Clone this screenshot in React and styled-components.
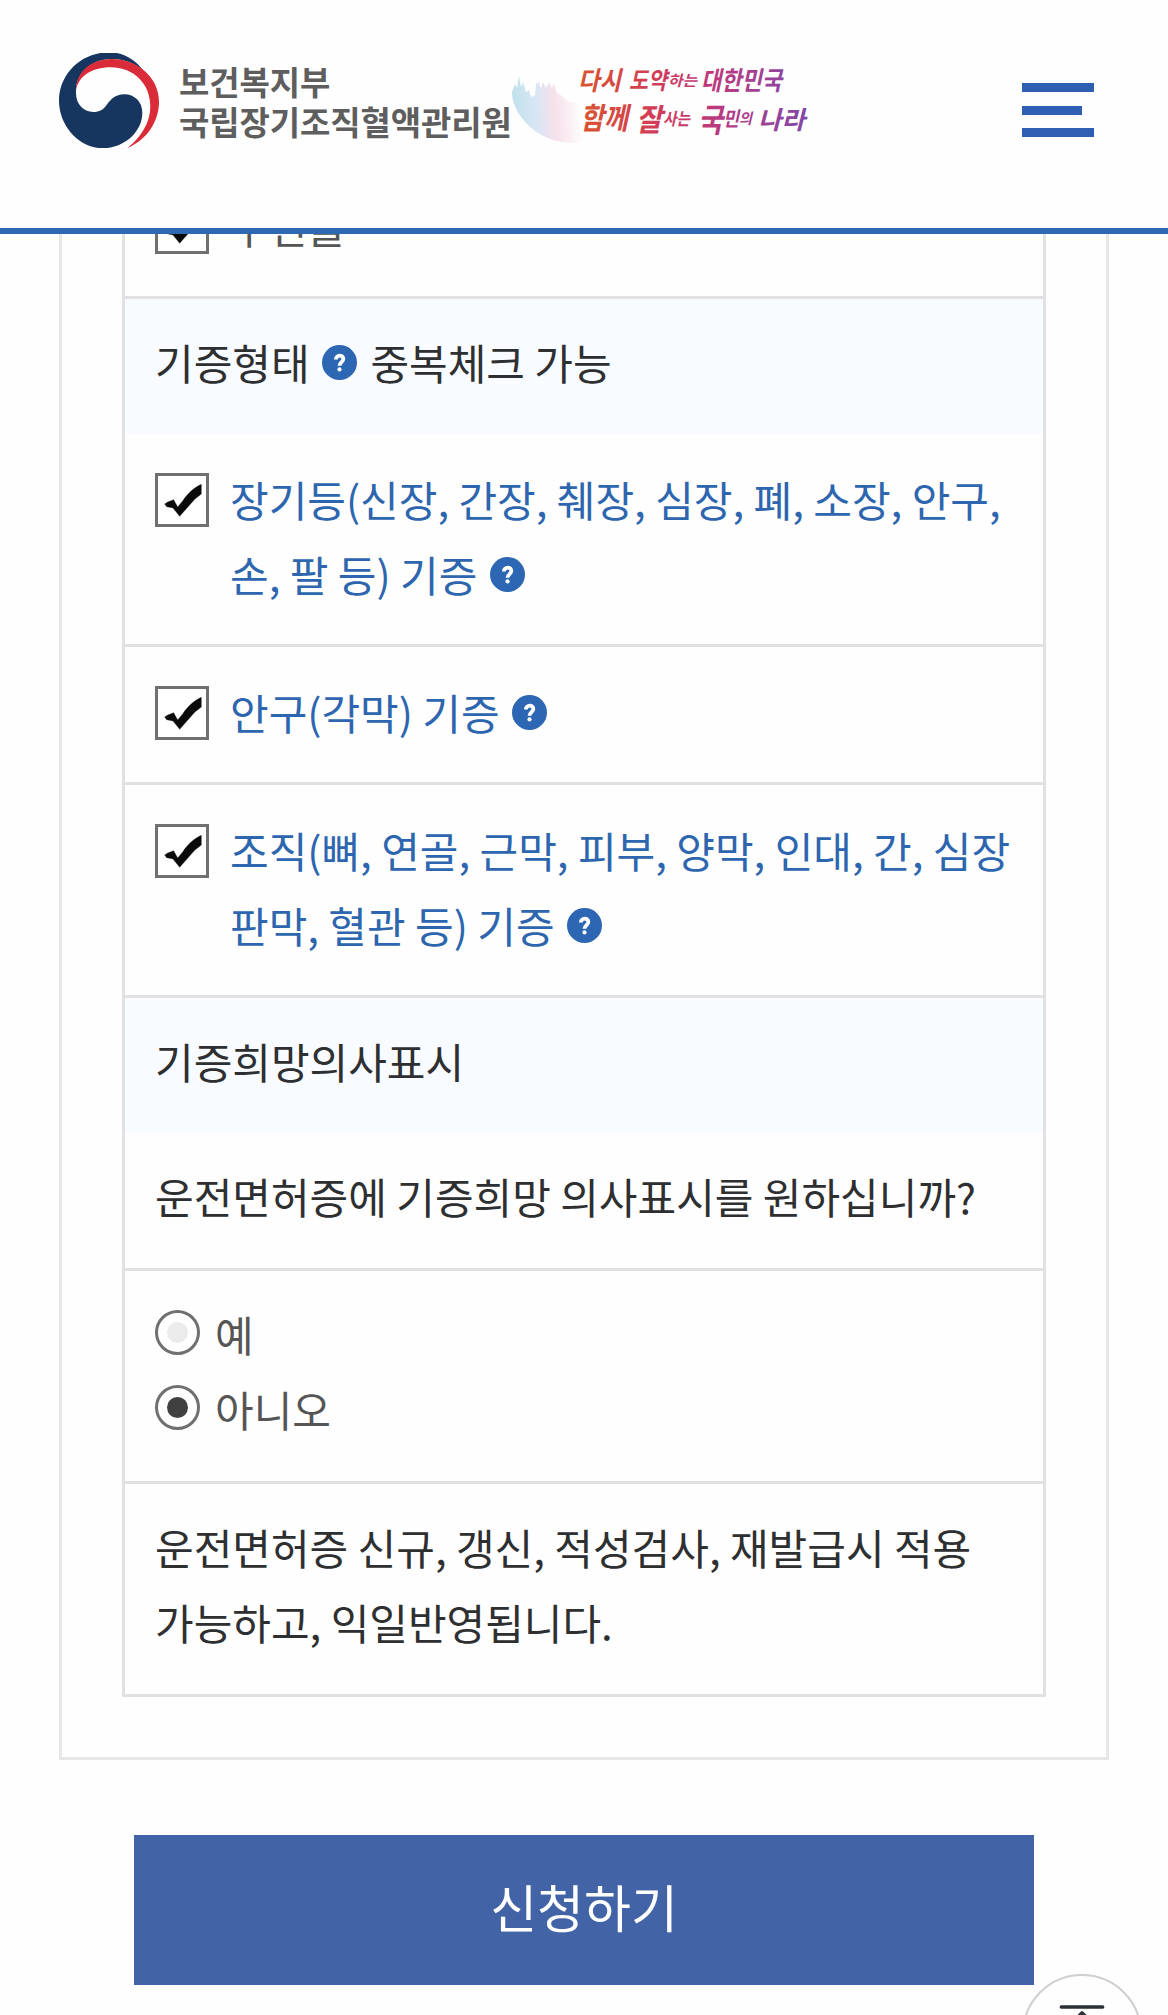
import React from "react";
import styled, { createGlobalStyle, css } from "styled-components";

const GlobalStyle = createGlobalStyle`
  * { box-sizing: border-box; }
  html, body { margin: 0; padding: 0; background: #fefefe; }
  body { font-family: "Noto Sans CJK KR", "Noto Sans", sans-serif; }
`;

const Page = styled.div`
  position: relative;
  width: 1168px;
  height: 2015px;
  overflow: hidden;
  background: #fefefe;
`;

const Header = styled.header`
  position: absolute;
  top: 0;
  left: 0;
  right: 0;
  z-index: 2;
  height: 234px;
  padding: 53px 74px 0 59px;
  display: flex;
  align-items: flex-start;
  background: #fefefe;
  border-bottom: 6px solid #2d68b2;
`;

const Brand = styled.a`
  display: flex;
  width: 450px;
`;

const Emblem = styled.svg`
  flex: none;
  width: 100px;
  height: 95px;
`;

const BrandName = styled.div`
  margin: 9px 0 0 20px;
  flex: none;
  font-size: 33px;
  font-weight: 700;
  line-height: 39.5px;
  letter-spacing: -0.1px;
  color: #5e5e5e;
  white-space: nowrap;
`;

const Slogan = styled.svg`
  flex: none;
  width: 300px;
  height: 100px;
`;

const MenuButton = styled.button`
  margin: 30px 0 0 auto;
  padding: 0;
  border: 0;
  background: none;
  width: 72px;
  height: 54px;
  display: flex;
  flex-direction: column;
  justify-content: space-between;
`;

const MenuBar = styled.span`
  width: ${(p) => (p.$short ? 60 : 72)}px;
  height: 9px;
  background: #2e5fb3;
`;

const Main = styled.main`
  padding: 95px 59px 0;
`;

const FormBox = styled.section`
  border: 3px solid #e7e7e7;
  padding: 60px;
`;

const Table = styled.div`
  border: 3px solid #e1e1e1;
  font-size: 42px;
  line-height: 75px;
  color: #2e2f31;
`;

const Row = styled.div`
  padding: 25px 30px 35px;
  ${(p) =>
    p.$line &&
    css`
      border-bottom: 3px solid #e1e1e1;
    `}
`;

const HeadRow = styled(Row)`
  background: #f8fbff;
`;

const CheckRow = styled(Row)`
  padding: 27px 30px 33px;
`;

const Option = styled.label`
  display: flex;
  align-items: flex-start;
  color: ${(p) => (p.$link ? "#2d66ae" : "#555")};
`;

const OptionText = styled.span`
  flex: none;
  white-space: nowrap;
`;

const CheckFrame = styled.span`
  flex: none;
  width: 54px;
  height: 54px;
  margin: 12px 21px 0 0;
  border: 3px solid #707070;
  background: #fff;
`;

const CheckSvg = styled.svg`
  display: block;
  width: 48px;
  height: 48px;
`;

const RadioRing = styled.span`
  flex: none;
  width: 45px;
  height: 45px;
  margin: 14px 15px 0 0;
  border: 3px solid #707070;
  border-radius: 50%;
  display: flex;
  align-items: center;
  justify-content: center;

  &::after {
    content: "";
    width: 21px;
    height: 21px;
    border-radius: 50%;
    background: ${(p) => (p.$on ? "#404040" : "#ebebeb")};
  }
`;

const HelpSvg = styled.svg`
  width: 35px;
  height: 35px;
  margin: 0 4px 0 3px;
  vertical-align: 0px;
`;

const Actions = styled.div`
  margin-top: 75px;
  padding: 0 75px;
`;

const SubmitButton = styled.button`
  display: block;
  width: 100%;
  height: 150px;
  padding: 0 0 8px;
  border: 0;
  background: #4263a6;
  color: #fff;
  font-family: inherit;
  font-size: 51px;
  line-height: 142px;
`;

const TopButton = styled.button`
  position: absolute;
  left: 1022px;
  top: 1974px;
  width: 120px;
  height: 120px;
  padding: 0;
  border: 2px solid #cfcfcf;
  border-radius: 50%;
  background: #fefefe;
  display: flex;
  justify-content: center;
`;

const Help = () => (
  <HelpSvg viewBox="0 0 35 35">
    <circle cx="17.5" cy="17.5" r="17.5" fill="#2d66b2" />
    <path
      d="M13.9 14.4C13.9 9.4 21.5 9.4 21.3 14.2C21.2 17.1 17.6 17.3 17.5 20.8"
      fill="none"
      stroke="#fff"
      strokeWidth="3.8"
    />
    <circle cx="17.5" cy="24.4" r="2.1" fill="#fff" />
  </HelpSvg>
);

const CheckBox = () => (
  <CheckFrame>
    <CheckSvg viewBox="114 108 144 144">
      <path
        d="M134 192L143 186L161 179L173 201L188 183C203 160 224 141 244 133V162L224 178L179 229L159 204L140 200Z"
        fill="#0a0a0a"
        stroke="#0a0a0a"
        strokeOpacity=".3"
        strokeWidth="3"
      />
    </CheckSvg>
  </CheckFrame>
);

const words = [
  ["다시", 578, 90, 43, 26, 700],
  ["도약", 629, 89, 38, 24, 700],
  ["하는", 668, 86, 29, 15, 700],
  ["대한민국", 701, 90, 81, 26, 700],
  ["함께", 580, 129, 48, 30, 700],
  ["잘", 636, 131, 26, 31, 700],
  ["사는", 663, 125, 27, 17, 700],
  ["국", 698, 132, 25, 33, 700],
  ["민", 723, 126, 16, 20, 700],
  ["의", 739, 124, 13, 15, 700],
  ["나라", 758, 129, 47, 25, 700],
];

const SloganMark = () => (
  <Slogan viewBox="509 53 300 100">
    <defs>
      <linearGradient id="ink" gradientUnits="userSpaceOnUse" x1="579" y1="0" x2="805" y2="0">
        <stop offset="0" stopColor="#d9542f" />
        <stop offset=".38" stopColor="#d03a5c" />
        <stop offset=".62" stopColor="#b93a80" />
        <stop offset="1" stopColor="#8347a8" />
      </linearGradient>
      <linearGradient id="wave" gradientUnits="userSpaceOnUse" x1="512" y1="112" x2="582" y2="108">
        <stop offset="0" stopColor="#bfe0ec" />
        <stop offset=".35" stopColor="#d9e6f4" />
        <stop offset=".62" stopColor="#f6e1ea" />
        <stop offset="1" stopColor="#fefefe" />
      </linearGradient>
    </defs>
    <path
      d="M512 92L515 84L517 88L519 76L521 87L523 82L526 92L529 90L531 97L535 95L536 84L539 82L541 89L543 82L546 88L549 82L552 88L554 84L557 93L562 96L568 101L580 104C576 118 580 132 592 140C570 147 543 141 527 124C517 113 512 103 512 92Z"
      fill="url(#wave)"
    />
    {words.map(([t, x, y, w, size, weight], i) => (
      <text
        key={i}
        x={x}
        y={y}
        textLength={w}
        lengthAdjust="spacingAndGlyphs"
        fontSize={size}
        fontWeight={weight}
        fontStyle="italic"
        fill="url(#ink)"
      >
        {t}
      </text>
    ))}
  </Slogan>
);

export default function App() {
  return (
    <Page>
      <GlobalStyle />
      <Header>
        <Brand>
          <Emblem viewBox="57 69 300 285">
            <path
              d="M108 190C104 135 150 87 215 87C250 87 285 100 310 122C282 84 245 67 207 67C120 67 57 135 57 212C57 290 120 355 190 355C255 352 307 305 307 248C307 215 283 193 253 193C225 193 212 210 202 222C190 240 178 246 160 246C130 246 108 222 108 190Z"
              fill="#17365f"
            />
            <path
              d="M108 185C106 130 150 87 215 87C290 87 357 140 357 215C357 275 320 330 262 354C305 320 331 275 331 230C331 160 280 112 212 112C155 112 112 140 108 185Z"
              fill="#d92b38"
            />
          </Emblem>
          <BrandName>
            보건복지부
            <br />
            국립장기조직혈액관리원
          </BrandName>
        </Brand>
        <SloganMark />
        <MenuButton aria-label="메뉴">
          <MenuBar />
          <MenuBar $short />
          <MenuBar />
        </MenuButton>
      </Header>

      <Main>
        <FormBox>
          <Table>
            <CheckRow $line>
              <Option>
                <CheckBox />
                <OptionText>우편물</OptionText>
              </Option>
            </CheckRow>
            <HeadRow>
              기증형태 <Help /> 중복체크 가능
            </HeadRow>
            <CheckRow $line>
              <Option $link>
                <CheckBox />
                <OptionText>
                  장기등(신장, 간장, 췌장, 심장, 폐, 소장, 안구,
                  <br />
                  손, 팔 등) 기증 <Help />
                </OptionText>
              </Option>
            </CheckRow>
            <CheckRow $line>
              <Option $link>
                <CheckBox />
                <OptionText>
                  안구(각막) 기증 <Help />
                </OptionText>
              </Option>
            </CheckRow>
            <CheckRow $line>
              <Option $link>
                <CheckBox />
                <OptionText>
                  조직(뼈, 연골, 근막, 피부, 양막, 인대, 간, 심장
                  <br />
                  판막, 혈관 등) 기증 <Help />
                </OptionText>
              </Option>
            </CheckRow>
            <HeadRow>기증희망의사표시</HeadRow>
            <Row $line>운전면허증에 기증희망 의사표시를 원하십니까?</Row>
            <Row $line>
              <Option>
                <RadioRing />
                <OptionText>예</OptionText>
              </Option>
              <Option>
                <RadioRing $on />
                <OptionText>아니오</OptionText>
              </Option>
            </Row>
            <Row>
              운전면허증 신규, 갱신, 적성검사, 재발급시 적용
              <br />
              가능하고, 익일반영됩니다.
            </Row>
          </Table>
        </FormBox>
        <Actions>
          <SubmitButton>신청하기</SubmitButton>
        </Actions>
      </Main>

      <TopButton aria-label="맨 위로">
        <svg width="60" height="90" viewBox="0 0 60 90">
          <path d="M9.3 31H50.7" stroke="#2d2f36" strokeWidth="3.4" strokeLinecap="round" />
          <path
            d="M30 37V70M16 51L30 37L44 51"
            fill="none"
            stroke="#2d2f36"
            strokeWidth="3.6"
            strokeLinecap="round"
            strokeLinejoin="round"
          />
        </svg>
      </TopButton>
    </Page>
  );
}
